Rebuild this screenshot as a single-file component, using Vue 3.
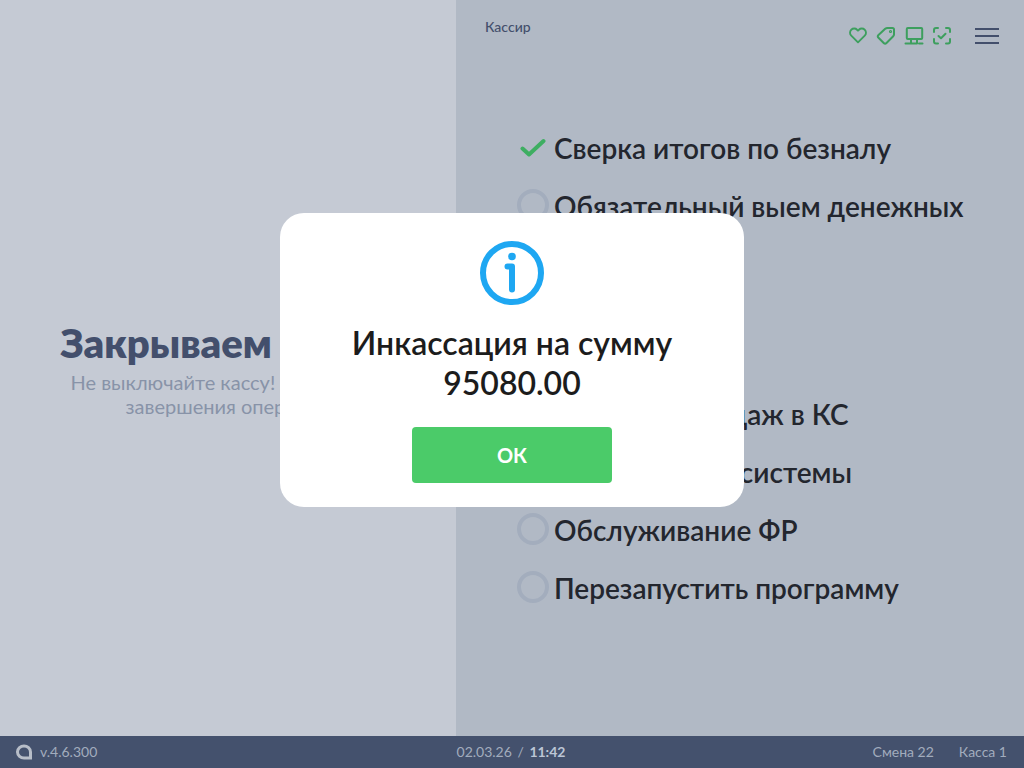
<script setup>
const tasks = [
  { text: 'Сверка итогов по безналу', done: true },
  { text: 'Обязательный выем денежных средств' },
  { text: 'Инкассация' },
  { text: 'Закрытие дня' },
  { text: 'Выгрузка продаж в КС' },
  { text: 'Тестирование системы' },
  { text: 'Обслуживание ФР' },
  { text: 'Перезапустить программу' },
]
</script>

<template>
  <div class="screen">
    <main class="panels">
      <section class="left">
        <h1>Закрываем смену</h1>
        <p>Не выключайте кассу! Дождитесь<br />завершения операций</p>
      </section>
      <section class="right">
        <header class="top">
          <span class="role">Кассир</span>
          <div class="tools">
            <svg class="ico" width="20" height="20" viewBox="-0.700 -0.500 21.400 21.400"><path d="M10 17 2.800 9.800C1 8 1 5.200 2.800 3.500 4.600 1.800 7.400 1.800 9 3.500L10 4.500 11 3.500C12.600 1.800 15.400 1.800 17.200 3.500 19 5.200 19 8 17.200 9.800Z" /></svg>
            <svg class="ico" width="20" height="20" viewBox="0 0 20 20"><path d="M11.500 2H16.500C17.300 2 18 2.700 18 3.500V8.500C18 9.200 17.700 9.800 17.200 10.300L10.500 17C9.700 17.800 8.500 17.800 7.700 17L2.500 11.800C1.700 11 1.700 9.800 2.500 9L9.200 2.800C9.800 2.300 10.700 2 11.500 2Z" /><circle cx="14.500" cy="5.500" r=".6" /></svg>
            <svg class="ico" width="20" height="20" viewBox="0 0 20 20"><rect x="2.800" y="2" width="15.400" height="11" rx="1" /><path d="M7 13V17.500M1.500 17.500H13M15 17.500H18.500M13 13V17.500" /></svg>
            <svg class="ico" width="20" height="20" viewBox="0 0 20 20"><path d="M2 6V4C2 2.900 2.900 2 4 2H6M14 2H16C17.100 2 18 2.900 18 4V6M18 13V15.500C18 16.600 17.100 17.500 16 17.500H14M6 17.500H4C2.900 17.500 2 16.600 2 15.500V13M6.500 10 9 12.300 13.500 7.800" /></svg>
            <div class="burger"><i></i><i></i><i></i></div>
          </div>
        </header>
        <ul class="tasks">
          <li v-for="t in tasks" :key="t.text">
            <svg v-if="t.done" class="check" width="26" height="20" viewBox="0 0 26 20"><path d="M2.500 10.500 9 16.500 23.500 3" /></svg>
            <span v-else class="circle"></span>
            <span class="label">{{ t.text }}</span>
          </li>
        </ul>
      </section>
    </main>
    <footer class="bar">
      <div class="version">
        <svg width="18" height="18" viewBox="0 0 18 18"><path d="M9 3C5.600 3 2.500 5.600 2.500 9S5.600 15 9 15H15.500V9C15.500 5.600 12.400 3 9 3Z" /></svg>
        <span>v.4.6.300</span>
      </div>
      <div class="clock">02.03.26 <span class="slash">/</span> <b>11:42</b></div>
      <div class="meta"><span>Смена 22</span><span>Касса 1</span></div>
    </footer>
    <div class="modal">
      <svg width="64" height="64" viewBox="0 0 64 64"><circle cx="32" cy="32" r="29" class="ring" /><circle cx="32" cy="15.500" r="3.800" class="dot" /><path d="M27.500 25.500H32V48.500" class="stem" /></svg>
      <div class="msg">Инкассация на сумму<br />95080.00</div>
      <button class="ok">ОК</button>
    </div>
  </div>
</template>

<style>
html, body { margin: 0; padding: 0; }
</style>

<style scoped>
.screen { position: relative; width: 1024px; height: 768px; display: flex; flex-direction: column; overflow: hidden; font-family: Lato, "Noto Sans", sans-serif; background: #c5cad4; }
.panels { flex: 1; display: grid; grid-template-columns: 456px 568px; min-height: 0; }
.left { background: #c5cad4; display: flex; flex-direction: column; align-items: center; padding-top: 319px; box-sizing: border-box; }
.left h1 { margin: 0; font-size: 40px; line-height: 48px; font-weight: 800; color: #434f6c; white-space: nowrap; }
.left p { margin: 3px 0 0; font-size: 20px; line-height: 24px; color: #8893a8; text-align: center; white-space: nowrap; }
.right { background: #b1b9c5; display: flex; flex-direction: column; }
.top { display: flex; justify-content: space-between; align-items: flex-start; padding: 18px 25px 0 29px; height: 124px; box-sizing: border-box; flex: none; }
.role { font-size: 14px; line-height: 17px; font-weight: 500; color: #434f6c; }
.tools { display: flex; align-items: center; gap: 8px; margin-top: 8px; }
.ico { fill: none; stroke: #3d9f5e; stroke-width: 2; stroke-linecap: round; stroke-linejoin: round; }
.burger { display: flex; flex-direction: column; gap: 5px; margin-left: 15px; }
.burger i { display: block; width: 24px; height: 2px; background: #434f6c; }
.tasks { list-style: none; margin: 0; padding: 7px 60px 0 61px; display: flex; flex-direction: column; gap: 23px; }
.tasks li { display: flex; align-items: flex-start; gap: 5px; }
.label { font-size: 28px; line-height: 34.800px; font-weight: 600; color: #23262e; }
.circle { flex: none; width: 32px; height: 32px; box-sizing: border-box; border: 4px solid #a3adbd; border-radius: 50%; }
.check { flex: none; width: 32px; height: 35px; fill: none; stroke: #3eae62; stroke-width: 4; stroke-linecap: round; stroke-linejoin: round; padding: 7px 3px 8px 3px; box-sizing: border-box; }
.bar { flex: none; height: 32px; background: #44516d; display: grid; grid-template-columns: 1fr auto 1fr; align-items: center; padding: 0 17px 2px 15px; box-sizing: border-box; font-size: 14px; color: #a2acbd; }
.version { display: flex; align-items: center; gap: 7px; }
.version svg { fill: none; stroke: #b7bdc8; stroke-width: 3; margin-top: 2px; }
.clock { white-space: nowrap; }
.slash { margin: 0 2px; }
.clock b { color: #bcc6d6; font-weight: 700; }
.meta { display: flex; justify-content: flex-end; gap: 25px; }
.modal { position: absolute; left: 280px; top: 213px; width: 464px; height: 294px; box-sizing: border-box; padding-top: 28px; background: #fff; border-radius: 24px; display: flex; flex-direction: column; align-items: center; }
.ring { fill: none; stroke: #1ea7f2; stroke-width: 6; }
.dot { fill: #1ea7f2; }
.stem { fill: none; stroke: #1ea7f2; stroke-width: 6; stroke-linecap: round; stroke-linejoin: round; }
.msg { margin-top: 18px; font-size: 32px; line-height: 40px; font-weight: 600; color: #1c1c1c; text-align: center; }
.ok { margin-top: 24px; width: 200px; height: 56px; border: 0; border-radius: 4px; background: #4bcb69; color: #fff; font: 700 20px Lato, sans-serif; }
</style>
